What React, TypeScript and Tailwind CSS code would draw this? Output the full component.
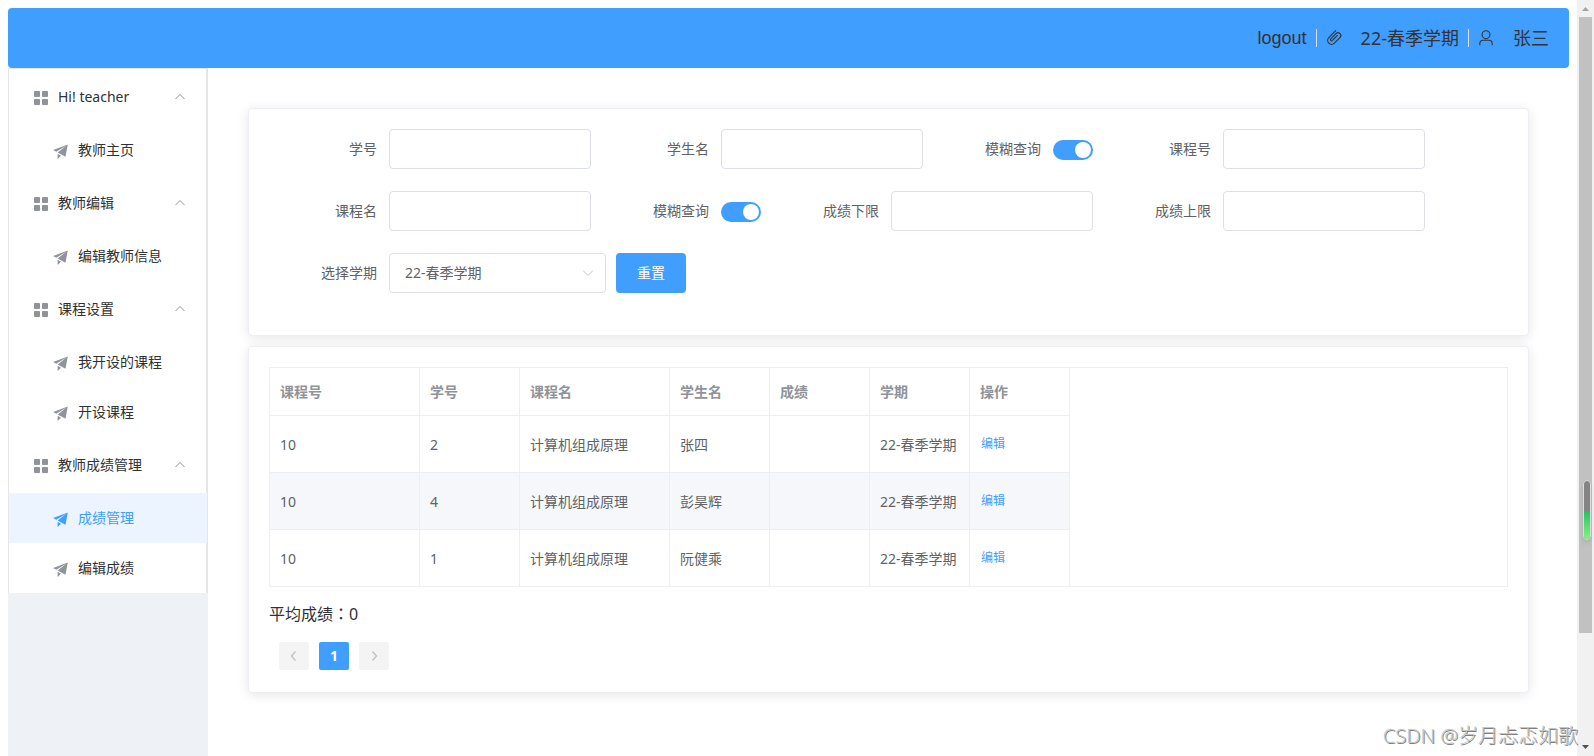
import { useState } from 'react';

interface MenuGroup {
  title: string;
  items: string[];
}

interface ScoreRow {
  courseId: string;
  studentId: string;
  courseName: string;
  studentName: string;
  grade: string;
  term: string;
}

const MENU: MenuGroup[] = [
  { title: 'Hi! teacher', items: ['教师主页'] },
  { title: '教师编辑', items: ['编辑教师信息'] },
  { title: '课程设置', items: ['我开设的课程', '开设课程'] },
  { title: '教师成绩管理', items: ['成绩管理', '编辑成绩'] },
];

const TERM = '22-春季学期';

const ROWS: ScoreRow[] = [
  { courseId: '10', studentId: '2', courseName: '计算机组成原理', studentName: '张四', grade: '', term: TERM },
  { courseId: '10', studentId: '4', courseName: '计算机组成原理', studentName: '彭昊辉', grade: '', term: TERM },
  { courseId: '10', studentId: '1', courseName: '计算机组成原理', studentName: '阮健乘', grade: '', term: TERM },
];

const COLUMNS = [
  { label: '课程号', width: 'w-[150px]' },
  { label: '学号', width: 'w-[100px]' },
  { label: '课程名', width: 'w-[150px]' },
  { label: '学生名', width: 'w-[100px]' },
  { label: '成绩', width: 'w-[100px]' },
  { label: '学期', width: 'w-[100px]' },
  { label: '操作', width: 'w-[100px]' },
];

const GridIcon = () => (
  <svg viewBox="0 0 18 18" className="size-[18px] shrink-0 fill-[#909399]" aria-hidden="true">
    <rect x="2" y="3" width="6" height="6" rx="0.8" />
    <rect x="10" y="3" width="6" height="6" rx="0.8" />
    <rect x="2" y="11" width="6" height="6" rx="0.8" />
    <rect x="10" y="11" width="6" height="6" rx="0.8" />
  </svg>
);

const PlaneIcon = () => (
  <svg viewBox="0 -64 1024 1024" className="size-[18px] shrink-0 fill-current" aria-hidden="true">
    <path d="m64 448 832-320-128 704-446.080-243.328L832 192 242.816 545.472 64 448zm256 512V657.024L512 768 320 960z" />
  </svg>
);

const PaperclipIcon = () => (
  <svg viewBox="0 0 1024 1024" className="size-[18px] shrink-0 fill-current" aria-hidden="true">
    <path d="M602.496 240.448A192 192 0 1 1 874.048 512l-316.8 316.800A256 256 0 0 1 195.200 466.752L602.496 59.456l45.248 45.248L240.448 512A192 192 0 0 0 512 783.552l316.800-316.800a128 128 0 1 0-181.056-181.056L353.600 579.904a32 32 0 1 0 45.248 45.248l294.144-294.144 45.312 45.248L444.096 670.400a96 96 0 1 1-135.744-135.744l294.144-294.208z" />
  </svg>
);

const UserIcon = () => (
  <svg viewBox="0 0 1024 1024" className="size-[18px] shrink-0 fill-current" aria-hidden="true">
    <path d="M512 512a192 192 0 1 0 0-384 192 192 0 0 0 0 384zm0 64a256 256 0 1 1 0-512 256 256 0 0 1 0 512zM128 928v-96a224 224 0 0 1 224-224h320a224 224 0 0 1 224 224v96h-64v-96a160 160 0 0 0-160-160H352a160 160 0 0 0-160 160v96z" />
  </svg>
);

interface ChevronProps {
  points: string;
  className: string;
}

const Chevron = ({ points, className }: ChevronProps) => (
  <svg viewBox="0 0 12 12" className={className} fill="none" stroke="currentColor" aria-hidden="true">
    <polyline points={points} />
  </svg>
);

const Header = () => (
  <header className="flex h-[60px] items-center justify-end rounded bg-[#409eff] pr-5 text-lg text-[#333]">
    <button type="button" className="font-[Liberation_Sans,sans-serif]">logout</button>
    <span className="ml-[9px] h-[18px] w-px bg-[#dcdfe6]" />
    <span className="ml-2 flex items-center gap-[18px]">
      <PaperclipIcon />
      <span>{TERM}</span>
    </span>
    <span className="ml-[9px] h-[18px] w-px bg-[#dcdfe6]" />
    <span className="ml-2 flex items-center gap-[18px]">
      <UserIcon />
      <span>张三</span>
    </span>
  </header>
);

interface SidebarProps {
  active: string;
  onSelect: (item: string) => void;
}

const Sidebar = ({ active, onSelect }: SidebarProps) => (
  <aside className="w-[200px] shrink-0 bg-[#eef1f6] text-sm text-[#303133]">
    <nav className="border border-b-0 border-[#e6e6e6] bg-white">
      {MENU.map((group) => (
        <section key={group.title}>
          <button
            type="button"
            className="flex h-14 w-full items-center border-r border-[#e6e6e6] pr-5 pl-[23px] text-left"
          >
            <GridIcon />
            <span className="ml-2 flex-1">{group.title}</span>
            <Chevron points="1.5,8 6,3.500 10.500,8" className="size-3 text-[#909399]" />
          </button>
          {group.items.map((item) => (
            <button
              key={item}
              type="button"
              onClick={() => onSelect(item)}
              className={
                item === active
                  ? 'flex h-[50px] w-full items-center bg-[#ecf5ff] pl-[43px] text-left text-[#409eff]'
                  : 'flex h-[50px] w-full items-center border-r border-[#e6e6e6] pl-[43px] text-left'
              }
            >
              <span className={item === active ? 'text-[#409eff]' : 'text-[#909399]'}>
                <PlaneIcon />
              </span>
              <span className="ml-2">{item}</span>
            </button>
          ))}
        </section>
      ))}
    </nav>
  </aside>
);

interface FieldProps {
  id: string;
  label: string;
}

const labelClass = 'w-[120px] pr-3 text-right text-sm leading-10 text-[#606266]';

const TextField = ({ id, label }: FieldProps) => (
  <div className="mr-2.5 mb-[22px] flex">
    <label htmlFor={id} className={labelClass}>{label}</label>
    <input
      id={id}
      type="text"
      className="h-10 w-[202px] rounded border border-[#dcdfe6] px-[15px] text-sm text-[#606266] outline-none focus:border-[#409eff]"
    />
  </div>
);

const SwitchField = ({ id, label }: FieldProps) => (
  <div className="mr-2.5 mb-[22px] flex">
    <label htmlFor={id} className={labelClass}>{label}</label>
    <input
      id={id}
      type="checkbox"
      role="switch"
      defaultChecked
      className="mt-[11px] h-5 w-10 appearance-none rounded-full bg-[#dcdfe6] p-0.5 before:block before:size-4 before:rounded-full before:bg-white checked:bg-[#409eff] checked:before:ml-5"
    />
  </div>
);

const SearchForm = () => (
  <form
    onSubmit={(e) => e.preventDefault()}
    className="flex flex-wrap rounded border border-[#ebeef5] bg-white p-5 shadow-[0_2px_12px_0_rgba(0,0,0,0.1)]"
  >
    <TextField id="sid" label="学号" />
    <TextField id="sname" label="学生名" />
    <SwitchField id="sfuzzy" label="模糊查询" />
    <TextField id="cid" label="课程号" />
    <TextField id="cname" label="课程名" />
    <SwitchField id="cfuzzy" label="模糊查询" />
    <TextField id="low" label="成绩下限" />
    <TextField id="high" label="成绩上限" />
    <div className="mr-2.5 mb-[22px] flex">
      <label htmlFor="term" className={labelClass}>选择学期</label>
      <div className="relative">
        <select
          id="term"
          className="h-10 w-[217px] appearance-none rounded border border-[#dcdfe6] bg-white pr-[30px] pl-[15px] text-sm text-[#606266] outline-none"
        >
          <option>{TERM}</option>
        </select>
        <Chevron
          points="1,3.500 6,8.500 11,3.500"
          className="pointer-events-none absolute top-3.5 right-3 size-3 text-[#c0c4cc]"
        />
      </div>
    </div>
    <button type="reset" className="h-10 w-[70px] rounded bg-[#409eff] text-sm text-white">
      重置
    </button>
  </form>
);

const ScoreTable = () => {
  const cell = 'border-r border-b border-[#ebeef5] px-2.5';
  const bodyCell = `${cell} pt-0.5`;

  return (
    <div className="border border-[#ebeef5]">
      <table className="-mb-px w-[800px] table-fixed border-separate border-spacing-0 text-left text-sm text-[#606266]">
        <thead>
          <tr className="h-12 text-[#909399]">
            {COLUMNS.map((col) => (
              <th key={col.label} className={`${cell} ${col.width} font-bold`}>{col.label}</th>
            ))}
          </tr>
        </thead>
        <tbody>
          {ROWS.map((row) => (
            <tr key={row.studentId} className="h-[57px] even:bg-[#f5f7fa]">
              <td className={bodyCell}>{row.courseId}</td>
              <td className={bodyCell}>{row.studentId}</td>
              <td className={bodyCell}>{row.courseName}</td>
              <td className={bodyCell}>{row.studentName}</td>
              <td className={bodyCell}>{row.grade}</td>
              <td className={`${bodyCell} whitespace-nowrap`}>{row.term}</td>
              <td className={cell}>
                <button type="button" className="block pl-px text-xs text-[#409eff]">编辑</button>
              </td>
            </tr>
          ))}
        </tbody>
      </table>
    </div>
  );
};

const Pagination = () => (
  <div className="flex gap-2.5 px-2.5 pb-0.5">
    <button type="button" disabled aria-label="上一页" className="flex h-7 w-[30px] items-center justify-center rounded-xs bg-[#f4f4f5] text-[#c0c4cc]">
      <Chevron points="7.500,1.500 3.500,6 7.500,10.500" className="size-3 stroke-[1.5]" />
    </button>
    <button type="button" className="h-7 w-[30px] rounded-xs bg-[#409eff] text-sm font-bold text-white">1</button>
    <button type="button" disabled aria-label="下一页" className="flex h-7 w-[30px] items-center justify-center rounded-xs bg-[#f4f4f5] text-[#c0c4cc]">
      <Chevron points="4.500,1.500 8.500,6 4.500,10.500" className="size-3 stroke-[1.5]" />
    </button>
  </div>
);

const Scrollbar = () => (
  <div className="flex w-[17px] shrink-0 flex-col items-center bg-[#f1f1f1]" aria-hidden="true">
    <svg viewBox="0 0 17 17" className="size-[17px] fill-[#a3a3a3]">
      <path d="M5 11 8.500 7l3.500 4z" />
    </svg>
    <div className="w-[13px] grow-[58] basis-0 bg-[#c1c1c1]" />
    <div className="grow-[10] basis-0" />
    <svg viewBox="0 0 17 17" className="size-[17px] fill-[#505050]">
      <path d="M5 6h7l-3.500 4z" />
    </svg>
  </div>
);

export default function App() {
  const [active, setActive] = useState('成绩管理');

  return (
    <div className="relative flex h-screen overflow-hidden bg-white font-['Noto_Sans','Noto_Sans_CJK_SC',sans-serif]">
      <div className="flex min-w-0 flex-1 flex-col p-2 pb-0">
        <Header />
        <div className="flex min-h-0 flex-1">
          <Sidebar active={active} onSelect={setActive} />
          <main className="flex min-w-0 flex-1 flex-col gap-2.5 p-10">
            <SearchForm />
            <section className="rounded border border-[#ebeef5] bg-white p-5 shadow-[0_2px_12px_0_rgba(0,0,0,0.1)]">
              <ScoreTable />
              <p className="pt-[15px] pb-4 text-base text-[#303133]">
                平均成绩<span className="font-['Noto_Sans_CJK_TC',sans-serif] leading-none" lang="zh-TW">：</span>0
              </p>
              <Pagination />
            </section>
          </main>
        </div>
      </div>
      <Scrollbar />
      {/* floating gauge over the scrollbar */}
      <div className="absolute top-[480px] right-[3px] flex h-[60px] w-2 flex-col overflow-hidden rounded-full border border-[#dcdcdc] bg-[#848484] shadow-md">
        <div className="mt-auto h-[28px] bg-linear-to-b from-[#1fc162] to-[#7df57d]" />
      </div>
      <div className="absolute right-4 bottom-1.5 text-xl font-light text-[#c4c4c4] [text-shadow:1px_1px_0_#808080]">
        CSDN @岁月忐忑如歌
      </div>
    </div>
  );
}
